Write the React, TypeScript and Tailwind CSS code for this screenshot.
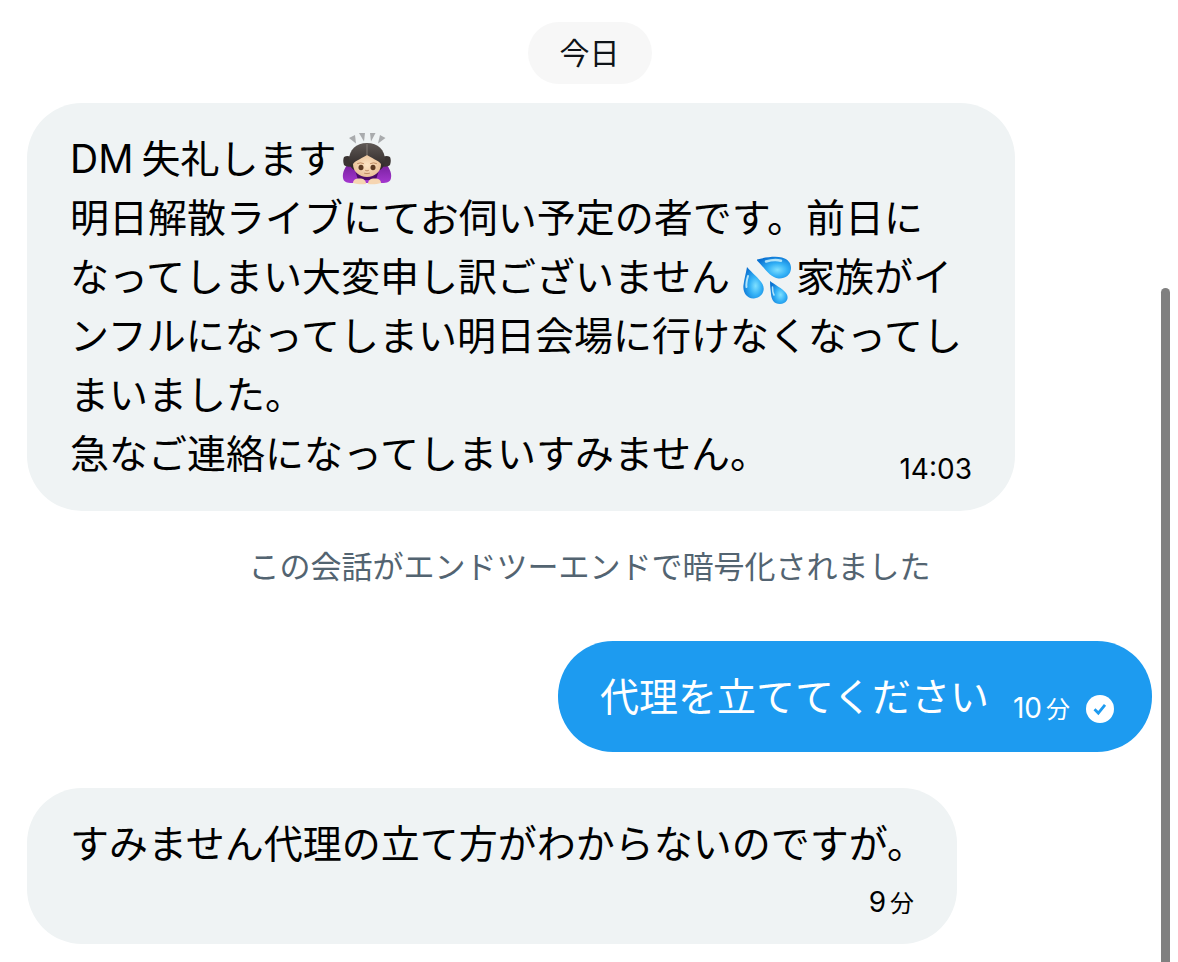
import type { ReactNode } from 'react';

function BowingEmoji() {
  return (
    <svg
      viewBox="0 0 50 53"
      role="img"
      aria-label="お辞儀"
      className="inline-block w-[50px] h-[53px] -mt-3 -mb-1 ml-1.5 align-middle"
    >
      <defs>
        <linearGradient id="bow-hair" x1="0" y1="0" x2="0" y2="1">
          <stop offset="0" stopColor="#5f5855" />
          <stop offset="1" stopColor="#2a2423" />
        </linearGradient>
        <radialGradient id="bow-face" cx="0.5" cy="0.45" r="0.6">
          <stop offset="0" stopColor="#fbe3c4" />
          <stop offset="1" stopColor="#e8bd93" />
        </radialGradient>
        <linearGradient id="bow-sleeve" x1="0" y1="0" x2="0" y2="1">
          <stop offset="0" stopColor="#6f1c94" />
          <stop offset="1" stopColor="#a437cf" />
        </linearGradient>
      </defs>
      <g fill="#a9abad">
        <path d="M7 6l6-3 1 8.500Z" />
        <path d="M17 1h6l-1 8.500Z" />
        <path d="M28 1h5.500l-4.500 8.500Z" />
        <path d="M38 3l5.500 3-7.500 5.500Z" />
      </g>
      <path
        d="M10 29C3 33 0 41 1 46c.6 4 4 5 9 5h30c5 0 8.500-1 9-5 1-5-2-13-9-17Z"
        fill="url(#bow-sleeve)"
      />
      <path d="M13 38h24l-3 10H16Z" fill="#4c0b68" />
      <path d="M2 25c3-2 7-1 9 2v7c-3 1-7 1-9-1-1-3-1-6 0-8Z" fill="#3a3332" />
      <path d="M48 25c-3-2-7-1-9 2v7c3 1 7 1 9-1 1-3 1-6 0-8Z" fill="#3a3332" />
      <path
        d="M25 11C14 11 7 18 7 28c0 5 2 8 5 10h26c3-2 5-5 5-10 0-10-7-17-18-17Z"
        fill="url(#bow-hair)"
      />
      <path
        d="M25 23c-4 3-11 5-14 9 0 7.500 6 13 14 13s14-5.500 14-13c-3-4-10-6-14-9Z"
        fill="url(#bow-face)"
      />
      <path d="M25 12v11" stroke="#918984" strokeWidth="0.8" />
      <ellipse cx="19" cy="35.500" rx="2.500" ry="2.700" fill="#5b3922" />
      <ellipse cx="31" cy="35.500" rx="2.500" ry="2.700" fill="#5b3922" />
      <path
        d="M15.500 31.500q3-1.500 6 0M28.500 31.500q3-1.500 6 0M23.500 38.500q1.500 1 3 0M22.500 41.300q2.500 .8 5 0"
        fill="none"
        stroke="#b9835a"
        strokeWidth="0.9"
        strokeLinecap="round"
      />
      <path d="M11 51c0-4 4-5 8-4.500 3 .5 5 2 5 5.500-4 .6-9 .3-13-1Z" fill="#f6d5b1" />
      <path d="M39 51c0-4-4-5-8-4.500-3 .5-5 2-5 5.500 4 .6 9 .3 13-1Z" fill="#f6d5b1" />
    </svg>
  );
}

function SweatEmoji() {
  return (
    <svg
      viewBox="0 0 50 50"
      role="img"
      aria-label="汗"
      className="inline-block w-[50px] h-[50px] -my-2 ml-3 mr-1 align-middle"
    >
      <defs>
        <radialGradient id="drop" cx="0.6" cy="0.6" r="0.65">
          <stop offset="0" stopColor="#7fe0ff" />
          <stop offset="0.45" stopColor="#33b1f6" />
          <stop offset="1" stopColor="#0a72d2" />
        </radialGradient>
      </defs>
      <g fill="url(#drop)">
        <path d="M15 4.500C24 2 34 1 40 2.500c6 1.500 9.500 6 9 11.500-.6 6-6 10-12.500 9.500C28 23 22 12 15 5.500Z" />
        <path d="M5 12c5 6 12 11 15.500 17 3.500 7-1 14-8.500 14.500S.5 37 1.500 30C2.200 24 4 18 5 12Z" />
        <path d="M28 26c5 4 12 7 16 12 4 5.500 0 11-6 11s-8.500-4-9-10c-.4-5-1-8-1-13Z" />
      </g>
      <g fill="none" stroke="#d6f8ff" strokeLinecap="round" opacity="0.8">
        <path d="M24 6.500c5-1.500 11-1.800 15-.8" strokeWidth="2.500" />
        <path d="M6 21c-1.500 5-2 8-1.500 11" strokeWidth="2" />
        <path d="M30.500 32c0 4 .3 6 1.500 8" strokeWidth="1.500" />
      </g>
    </svg>
  );
}

function SentIcon() {
  return (
    <svg viewBox="0 0 28 28" role="img" aria-label="送信済み" className="w-7 h-7">
      <circle cx="14" cy="14" r="14" fill="#fff" />
      <path
        d="M8.500 14.300l3.800 3.800 6.700-8.300"
        fill="none"
        stroke="#1d9bf0"
        strokeWidth="2.800"
      />
    </svg>
  );
}

function Minutes({ value }: { value: number }) {
  return (
    <time className="text-[28px] leading-8">
      {value}
      <span className="ml-1 text-2xl leading-8">分</span>
    </time>
  );
}

function Bubble({ className, children }: { className: string; children: ReactNode }) {
  return (
    <div className={`rounded-[55px] pt-[26px] text-[39px] leading-[59px] ${className}`}>
      {children}
    </div>
  );
}

export default function App() {
  return (
    <main
      lang="ja"
      className="relative min-h-screen overflow-hidden bg-white pt-[22px] pb-[18px] pl-[27px] pr-[26px] text-black font-[Inter,'Noto_Sans_CJK_JP',sans-serif]"
    >
      <div className="flex flex-col">
        <div className="self-center rounded-full bg-[#f7f7f7] px-8 text-[30px] leading-[62px] text-[#0f1419]">
          今日
        </div>

        <Bubble className="mt-[19px] w-full max-w-[988px] bg-[#eff3f4] px-[43px] pb-7">
          <p>
            <span className="mr-2">DM</span>失礼します
            <BowingEmoji />
            <br />
            明日解散ライブにてお伺い予定の者です。前日に
            <br />
            なってしまい大変申し訳ございません
            <SweatEmoji />
            家族がイ
            <br />
            ンフルになってしまい明日会場に行けなくなってし
            <br />
            まいました。
          </p>
          <div className="flex items-end justify-between">
            <p>急なご連絡になってしまいすみません。</p>
            <time className="text-[28px] leading-7">14:03</time>
          </div>
        </Bubble>

        <p className="mt-[33px] self-center text-[31px] leading-[46px] text-[#536471]">
          この会話がエンドツーエンドで暗号化されました
        </p>

        <Bubble className="mt-[51px] flex items-end self-end bg-[#1d9bf0] pb-[26px] pl-[42px] pr-[38px] text-white">
          <p>代理を立ててください</p>
          <div className="ml-6 flex items-center gap-4">
            <Minutes value={10} />
            <SentIcon />
          </div>
        </Bubble>

        <Bubble className="mt-9 self-start bg-[#eff3f4] pb-6 pl-[43px] pr-[31px]">
          <p>すみません代理の立て方がわからないのですが。</p>
          <div className="mt-[13px] mr-3 flex justify-end">
            <Minutes value={9} />
          </div>
        </Bubble>
      </div>

      <div className="absolute top-72 right-2 -bottom-2 w-[9px] rounded-full bg-[#808080]" />
    </main>
  );
}
